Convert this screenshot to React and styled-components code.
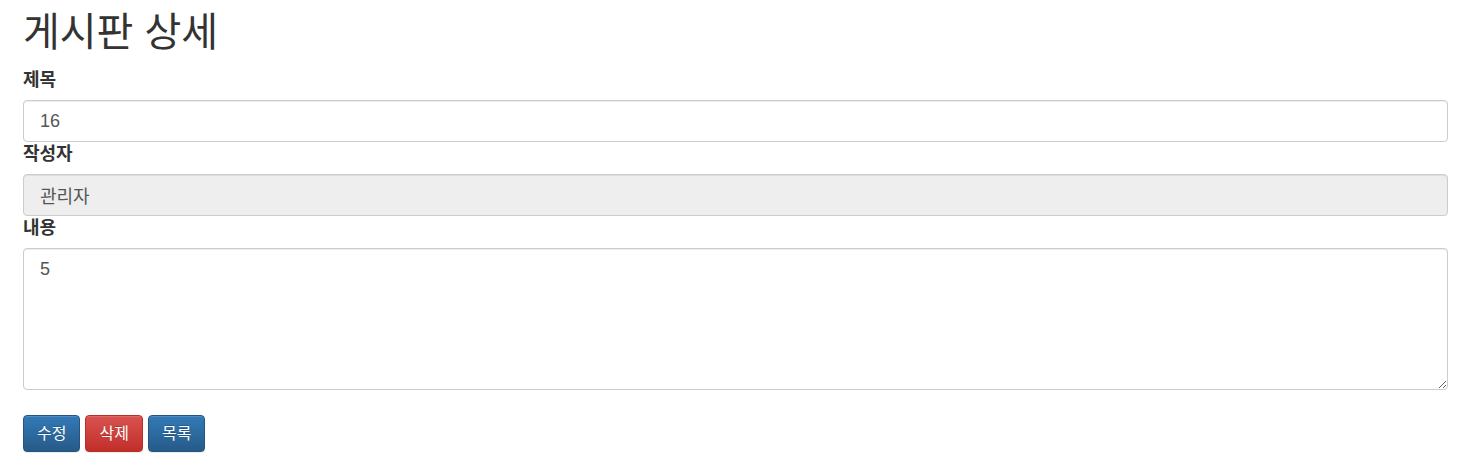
import styled, { createGlobalStyle } from 'styled-components';

const GlobalStyle = createGlobalStyle`
  * {
    box-sizing: border-box;
  }
  body {
    margin: 0;
    background: #ffffff;
    color: #333333;
    font-family: "Liberation Sans", "Noto Sans CJK KR", sans-serif;
    font-size: 16px;
  }
`;

export default function App() {
  return (
    <>
      <GlobalStyle />
      <StyledPage>
        <StyledTitle>게시판 상세</StyledTitle>
        <FormGroup>
          <Label htmlFor="title">제목</Label>
          <Input id="title" defaultValue="16" />
        </FormGroup>
        <FormGroup>
          <Label htmlFor="writer">작성자</Label>
          <Input id="writer" defaultValue="관리자" disabled />
        </FormGroup>
        <FormGroup>
          <Label htmlFor="content">내용</Label>
          <TextArea id="content" defaultValue="5" />
        </FormGroup>
        <ButtonContainer>
          <Button>수정</Button>
          <Button variant="danger">삭제</Button>
          <Button>목록</Button>
        </ButtonContainer>
      </StyledPage>
    </>
  );
}

const StyledPage = styled.div`
  padding: 10px 28px 20px 23px;
`;

const StyledTitle = styled.h1`
  margin: 0 0 14px;
  font-size: 40px;
  font-weight: 400;
  line-height: 44px;
  color: #333333;
`;

const FormGroup = styled.div`
  display: flex;
  flex-direction: column;
`;

const Label = styled.label`
  display: block;
  margin-bottom: 8px;
  font-size: 18px;
  font-weight: 700;
  line-height: 24px;
`;

const fieldStyle = `
  display: block;
  width: 100%;
  padding: 8px 16px;
  font-family: "Liberation Sans", "Noto Sans CJK KR", sans-serif;
  font-size: 18px;
  line-height: 24px;
  color: #555555;
  background-color: #ffffff;
  border: 1px solid #cccccc;
  border-radius: 4px;
  box-shadow: inset 0 1px 1px rgba(0, 0, 0, 0.075);
  outline: none;
`;

const Input = styled.input`
  ${fieldStyle}
  height: 42px;
  &:disabled {
    background-color: #eeeeee;
    cursor: not-allowed;
  }
`;

const TextArea = styled.textarea`
  ${fieldStyle}
  height: 142px;
  resize: vertical;
`;

const ButtonContainer = styled.div`
  display: flex;
  gap: 5px;
  margin-top: 25px;
`;

const Button = styled.button`
  padding: 8px 13px;
  font-family: "Liberation Sans", "Noto Sans CJK KR", sans-serif;
  font-size: 16px;
  line-height: 19px;
  color: #ffffff;
  text-shadow: 0 -1px 0 rgba(0, 0, 0, 0.2);
  border: 1px solid ${(p) => (p.variant === 'danger' ? '#b92c28' : '#245580')};
  border-radius: 4px;
  background-image: ${(p) => (p.variant === 'danger'
    ? 'linear-gradient(to bottom, #d9534f 0, #c12e2a 100%)'
    : 'linear-gradient(to bottom, #337ab7 0, #265a88 100%)')};
  box-shadow: inset 0 1px 0 rgba(255, 255, 255, 0.15), 0 1px 1px rgba(0, 0, 0, 0.075);
  cursor: pointer;
`;
